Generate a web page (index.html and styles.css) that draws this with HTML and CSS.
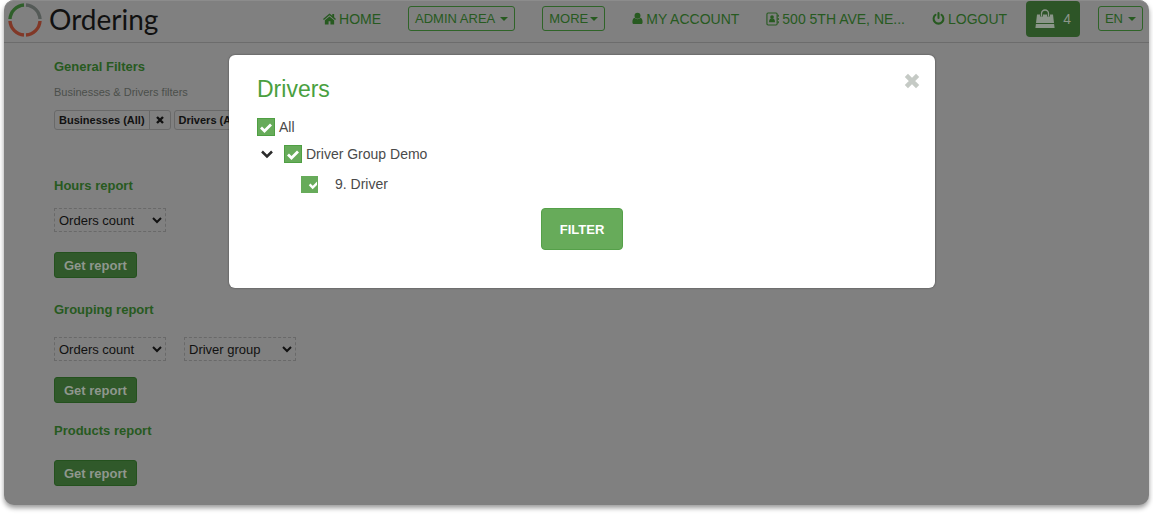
FILE: index.html
```html
<!DOCTYPE html>
<html lang="en">
<head>
<meta charset="utf-8">
<title>Ordering</title>
<link rel="stylesheet" href="styles.css">
</head>
<body>
<div class="window">
  <header class="topbar">
    <a class="brand" href="#">
      <svg class="brand-mark" viewBox="0 0 34 34" aria-hidden="true">
        <g fill="none" stroke-width="3.4">
          <path stroke="#2f5f2a" d="M2 16A15 15 0 0 1 16 2"/>
          <path stroke="#545a57" d="M18 2A15 15 0 0 1 32 16"/>
          <path stroke="#813827" d="M32 18A15 15 0 0 1 18 32M16 32A15 15 0 0 1 2 18"/>
        </g>
      </svg>
      <span>Ordering</span>
    </a>
    <nav class="nav">
      <a class="nav-link" href="#">
        <svg class="icon" viewBox="0 0 14 14" aria-hidden="true"><path d="M7 1 0 7l1 1 6-5 6 5 1-1-2-1.800V1.500h-2v2zM7 4.200 2 8.400V13h4V9.500h2V13h4V8.400z"/></svg>
        HOME</a>
      <button class="outline" type="button">ADMIN AREA <i class="caret"></i></button>
      <button class="outline tight" type="button">MORE<i class="caret"></i></button>
      <a class="nav-link" href="#">
        <svg class="icon narrow" viewBox="0 0 11 14" aria-hidden="true"><circle cx="5.500" cy="4" r="3.200"/><path d="M2.300 6.200C.8 6.600 0 8.500 0 11c0 1.300.8 2 2 2h7c1.200 0 2-.7 2-2 0-2.500-.8-4.400-2.300-4.800a4.200 4.200 0 0 1-6.400 0z"/></svg>
        MY ACCOUNT</a>
      <a class="nav-link" href="#">
        <svg class="icon" viewBox="0 0 14 14" aria-hidden="true"><rect x="1" y=".6" width="11" height="12.800" rx="1.200" fill="none" stroke="currentColor" stroke-width="1.200"/><path d="M12.600 2.500h1.200v2h-1.200zM12.600 6h1.200v2h-1.200zM12.600 9.500h1.200v2h-1.200z"/><circle cx="6.500" cy="4.900" r="2"/><path d="M3.300 10.500c0-2.500.8-3.800 1.700-3.800q1.500 1 3 0c.9 0 1.700 1.300 1.700 3.800z"/></svg>
        500 5TH AVE, NE...</a>
      <a class="nav-link" href="#">
        <svg class="icon power" viewBox="0 0 14 14" aria-hidden="true"><path d="M3.800 3a5.300 5.300 0 1 0 6.400 0M7 1.200v5.300" fill="none" stroke="currentColor" stroke-width="2.200" stroke-linecap="round"/></svg>
        LOGOUT</a>
      <div class="nav-end">
        <button class="cart" type="button" aria-label="Cart, 4 items">
          <svg class="bag" viewBox="0 0 20 20" aria-hidden="true"><path d="M2 5.500h16l1 8.500H1zM.9 15h18.200l.5 4H.4z" fill="#8b968a"/><path d="M6.500 7.500V5a3.500 3.500 0 0 1 7 0v2.500" fill="none" stroke="#2d5527" stroke-width="3"/><path d="M6.500 7.500V4.500a3.500 3.500 0 0 1 7 0v3" fill="none" stroke="#8b968a" stroke-width="1.300"/></svg>
          <span>4</span>
        </button>
        <button class="outline" type="button">EN <i class="caret"></i></button>
      </div>
    </nav>
  </header>

  <main class="content">
    <section class="general">
      <h2>General Filters</h2>
      <p class="hint">Businesses &amp; Drivers filters</p>
      <div class="chips">
        <div class="chip"><span>Businesses (All)</span><button type="button" aria-label="Remove Businesses"><svg viewBox="0 0 10 10"><path d="m2 2 6 6M8 2 2 8"/></svg></button></div>
        <div class="chip"><span>Drivers (All)</span><button type="button" aria-label="Remove Drivers"><svg viewBox="0 0 10 10"><path d="m2 2 6 6M8 2 2 8"/></svg></button></div>
      </div>
    </section>
    <section class="report hours">
      <h2>Hours report</h2>
      <div class="selects">
        <select aria-label="Hours measure"><option>Orders count</option></select>
      </div>
      <button class="solid" type="button">Get report</button>
    </section>
    <section class="report">
      <h2>Grouping report</h2>
      <div class="selects">
        <select aria-label="Grouping measure"><option>Orders count</option></select>
        <select aria-label="Group by"><option>Driver group</option></select>
      </div>
      <button class="solid" type="button">Get report</button>
    </section>
    <section class="report">
      <h2>Products report</h2>
      <button class="solid alone" type="button">Get report</button>
    </section>
  </main>

  <div class="modal" role="dialog" aria-labelledby="modal-title">
    <div class="modal-head">
      <h1 id="modal-title">Drivers</h1>
      <button class="close" type="button" aria-label="Close"><svg viewBox="0 0 16 16"><path d="m3 3 10 10M13 3 3 13"/></svg></button>
    </div>
    <div class="tree">
      <label class="row"><input class="check" type="checkbox" checked>All</label>
      <div class="row group">
        <button class="toggle" type="button" aria-label="Collapse group"><svg viewBox="0 0 14 14"><path d="m2 4.500 5 5 5-5"/></svg></button>
        <label class="row"><input class="check" type="checkbox" checked>Driver Group Demo</label>
      </div>
      <label class="row leaf"><input class="check small" type="checkbox" checked>9. Driver</label>
    </div>
    <button class="filter" type="button">FILTER</button>
  </div>
</div>
</body>
</html>
```
FILE: styles.css
```css
* { box-sizing: border-box; }

body {
  margin: 0;
  padding: 0 4px 9px;
  background: #fff;
  font-family: "Liberation Sans", Arial, sans-serif;
  font-size: 14px;
}

button, select, input { font: inherit; margin: 0; }
button { cursor: pointer; }
h1, h2, p { margin: 0; }

.window {
  position: relative;
  border-radius: 10px;
  background: #808080;
  box-shadow: 0 3px 5px rgba(0, 0, 0, .4);
}

.topbar {
  display: flex;
  align-items: center;
  justify-content: space-between;
  height: 43px;
  padding: 0 6px 6px 4px;
  border-top: 1px solid #8c8c8c;
  border-bottom: 1px solid #6c6c6c;
  border-radius: 10px 10px 0 0;
}

.brand {
  display: flex;
  align-items: center;
  gap: 7px;
  color: #111;
  font-family: Lato, sans-serif;
  font-size: 28px;
  line-height: 36px;
  text-decoration: none;
}
.brand-mark { width: 34px; height: 34px; margin-top: 2px; }

.nav { display: flex; align-items: center; gap: 27px; }
.nav-end { display: flex; align-items: center; gap: 18px; margin-left: -8px; }

.nav-link {
  display: flex;
  align-items: center;
  gap: 3px;
  color: #275a20;
  line-height: 20px;
  text-decoration: none;
  white-space: nowrap;
}
.icon { width: 13px; height: 14px; fill: currentColor; }
.narrow { width: 11px; height: 13px; }
.power { width: 13px; height: 13px; }

.outline {
  display: flex;
  align-items: center;
  gap: 5px;
  height: 25px;
  padding: 0 6px;
  border: 1px solid #2f6428;
  border-radius: 3px;
  background: none;
  color: #275a20;
  font-size: 13px;
  white-space: nowrap;
}
.tight { gap: 2px; }
.caret {
  border: 4px solid transparent;
  border-top-color: currentColor;
  border-bottom: 0;
}

.cart {
  display: flex;
  align-items: center;
  gap: 8px;
  height: 36px;
  padding: 0 9px;
  border: 0;
  border-radius: 4px;
  background: #2d5527;
  color: #8b968a;
}
.bag { width: 20px; height: 20px; }

.content { padding: 16px 50px 19px; }
.content h2 {
  color: #275a20;
  font-size: 13px;
  line-height: 16px;
}
.general { margin-bottom: 48px; }
.hint {
  margin: 9px 0 10px;
  color: #4b4f4b;
  font-size: 11px;
  line-height: 16px;
}

.chips { display: flex; gap: 3px; }
.chip {
  display: flex;
  height: 20px;
  border: 1px solid #696969;
  border-radius: 3px;
  color: #111;
  font-size: 11px;
  font-weight: bold;
  line-height: 18px;
}
.chip span { padding: 0 4px; }
.chip button {
  display: flex;
  align-items: center;
  padding: 0 5px;
  border: 0;
  border-left: 1px solid #696969;
  background: none;
}
.chip svg { width: 10px; height: 10px; stroke: #111; stroke-width: 2.400; }

.report { margin-bottom: 20px; }
.report:last-child { margin-bottom: 0; }
.selects { display: flex; gap: 18px; margin: 19px 0 16px; }
.hours { margin-bottom: 24px; }
.hours .selects { margin: 14px 0 20px; }
.selects select {
  width: 112px;
  height: 24px;
  border: 1px dashed #696969;
  background: transparent;
  color: #111;
  font-size: 13px;
}

.solid {
  display: block;
  height: 26px;
  padding: 0 9px;
  border: 1px solid #24511e;
  border-radius: 3px;
  background: #30592a;
  color: #8f978e;
  font-size: 13px;
  font-weight: bold;
}
.alone { margin-top: 21px; }

.modal {
  position: absolute;
  top: 55px;
  left: 225px;
  right: 214px;
  padding: 20px 14px 38px;
  border-radius: 6px;
  background: #fff;
  box-shadow: 0 0 2px rgba(0, 0, 0, .5);
  color: #4a4a4a;
}
.modal-head {
  display: flex;
  align-items: flex-start;
  justify-content: space-between;
  padding-left: 14px;
}
.modal h1 {
  color: #4aa03f;
  font-size: 23px;
  font-weight: normal;
  line-height: 28px;
}
.close {
  display: flex;
  padding: 0;
  margin-top: -3px;
  border: 0;
  background: none;
}
.close svg { width: 18px; height: 18px; stroke: #c5cac5; stroke-width: 4; }

.tree {
  display: flex;
  flex-direction: column;
  gap: 9px;
  margin-top: 15px;
  padding-left: 14px;
}
.row { display: flex; align-items: center; gap: 4px; line-height: 18px; }
.group { gap: 9px; }
.leaf { gap: 17px; margin-top: 3px; padding-left: 44px; }
.toggle {
  display: flex;
  padding: 0;
  margin-left: 2px;
  border: 0;
  background: none;
}
.toggle svg { width: 16px; height: 14px; fill: none; stroke: #2b2b2b; stroke-width: 2.500; }

.check {
  appearance: none;
  width: 18px;
  height: 18px;
  border: 1px solid #4f9f43;
  background: #67ab5a;
}
.check:checked {
  background-image: url("data:image/svg+xml,%3Csvg xmlns='http://www.w3.org/2000/svg' viewBox='0 0 16 16'%3E%3Cpath d='m3 8.500 3.500 3.500L13 5.500' fill='none' stroke='white' stroke-width='2.800'/%3E%3C/svg%3E");
}
.small { width: 17px; height: 17px; border-color: #67ab5a; }
.small:checked {
  background-position: 5px 0;
  background-repeat: no-repeat;
  background-size: 14px 14px;
}

.filter {
  display: block;
  height: 42px;
  margin: 15px auto 0;
  padding: 0 18px;
  border: 1px solid #55a049;
  border-radius: 4px;
  background: #67ab5a;
  color: #fff;
  font-size: 13px;
  font-weight: bold;
}
```
